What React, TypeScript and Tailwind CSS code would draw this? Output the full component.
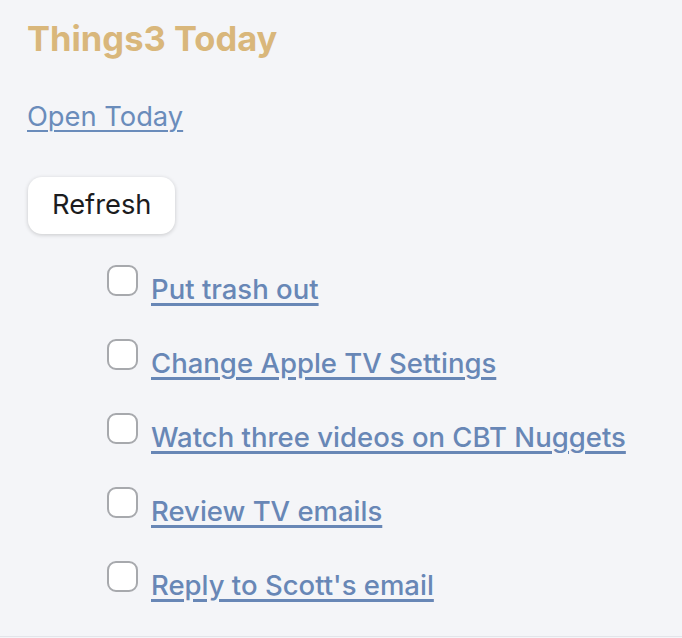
export default function App() {
  const tasks = [
    'Put trash out',
    'Change Apple TV Settings',
    'Watch three videos on CBT Nuggets',
    'Review TV emails',
    "Reply to Scott's email",
  ];

  return (
    <div className="min-h-[638px] bg-[#f4f5f8] font-['Inter',sans-serif]">
      <div className="border-b border-[#e3e5ea] px-[27px] pb-[34px] pt-[19px]">
        <h1 className="text-[34.5px] font-bold leading-[40px] text-[#d9b77b]">Things3 Today</h1>

        <a href="#" className="mt-[41px] block w-fit text-[27.3px] leading-[34px] text-[#6a8cbb] underline decoration-2 underline-offset-[4px]">
          Open Today
        </a>

        <button className="mt-[43px] ml-px h-[57px] rounded-[14px] bg-white px-[24px] text-[27.3px] text-[#1c1c1e] shadow-[0_1px_4px_rgba(0,0,0,0.18)]">
          Refresh
        </button>

        <ul className="mt-[38px] flex flex-col gap-[40px] pl-[80px]">
          {tasks.map((t) => (
            <li key={t} className="flex items-start gap-[13px]">
              <span className="mt-[-7px] h-[31px] w-[31px] shrink-0 rounded-[9px] border-2 border-[#a7a9ad] bg-white" />
              <a href="#" className="text-[27.5px] font-medium leading-[34px] text-[#6887b6] underline decoration-[3px] underline-offset-[4px]">
                {t}
              </a>
            </li>
          ))}
        </ul>
      </div>
    </div>
  );
}
